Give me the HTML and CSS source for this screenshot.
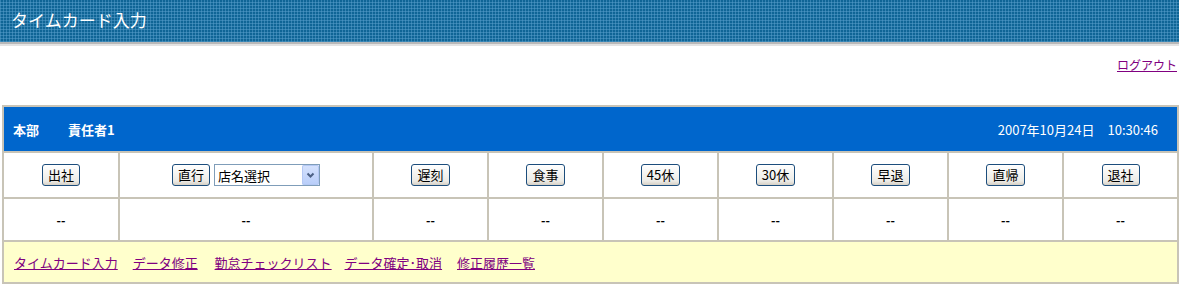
FILE: index.html
```html
<!DOCTYPE html>
<html lang="ja">
<head>
  <meta charset="UTF-8">
  <title>タイムカード入力</title>
  <link rel="stylesheet" href="styles.css">
</head>
<body>
  <div class="banner"><h1>タイムカード入力</h1></div>
  <div class="logout"><a href="#">ログアウト</a></div>
  <table class="timecard">
    <colgroup>
      <col class="w1"><col class="w2">
      <col class="wn"><col class="wn"><col class="wn"><col class="wn"><col class="wn"><col class="wn"><col class="wn">
    </colgroup>
    <tr class="head">
      <td colspan="9">
        <div class="head-row">
          <span class="who">本部<span class="gap"></span>責任者1</span>
          <span class="now">2007年10月24日<span class="gap2"></span>10:30:46</span>
        </div>
      </td>
    </tr>
    <tr class="actions">
      <td><button>出社</button></td>
      <td>
        <button>直行</button>
        <span class="shop">
          <select><option>店名選択</option></select>
          <svg class="drop" width="17" height="20" viewBox="0 0 17 20">
            <path d="M5.5 8.5 L8.5 11.5 L11.5 8.5" fill="none" stroke="#4d6185" stroke-width="2"/>
          </svg>
        </span>
      </td>
      <td><button>遅刻</button></td>
      <td><button>食事</button></td>
      <td><button>45休</button></td>
      <td><button>30休</button></td>
      <td><button>早退</button></td>
      <td><button>直帰</button></td>
      <td><button>退社</button></td>
    </tr>
    <tr class="times">
      <td>--</td><td>--</td><td>--</td><td>--</td><td>--</td><td>--</td><td>--</td><td>--</td><td>--</td>
    </tr>
    <tr class="menu">
      <td colspan="9">
        <a href="#">タイムカード入力</a>
        <a href="#">データ修正</a>
        <a href="#">勤怠チェックリスト</a>
        <a href="#">データ確定･取消</a>
        <a href="#">修正履歴一覧</a>
      </td>
    </tr>
  </table>
</body>
</html>
```

FILE: styles.css
```css
/* Base */
html, body { margin: 0; padding: 0; }

body {
  background: #fff;
  font-family: "Noto Sans CJK JP", "Liberation Sans", sans-serif;
  font-size: 13px;
  color: #000;
  width: 1179px;
}

/* Title banner */
.banner {
  height: 42px;
  background-color: #0f6596;
  background-image:
    repeating-linear-gradient(90deg, rgba(90,160,205,.5) 0 1px, transparent 1px 3px),
    repeating-linear-gradient(0deg, rgba(90,160,205,.5) 0 1px, transparent 1px 3px);
  border-bottom: 2px solid #b8b8b8;
  box-shadow: 0 2px 0 #e2e2e2;
}

.banner h1 {
  margin: 0;
  padding: 7px 0 0 11px;
  font-size: 17px;
  font-weight: normal;
  color: #fff;
  line-height: 26px;
}

.logout {
  text-align: right;
  padding: 12px 2px 0 0;
  height: 61px;
  box-sizing: border-box;
  font-size: 12px;
  line-height: 18px;
}

a { color: #800080; }

/* Table */
.timecard {
  margin: 0 2px;
  width: 1175px;
  border-collapse: collapse;
  border: 2px solid #c3bfb2;
  table-layout: fixed;
}

.w1 { width: 116px; }
.w2 { width: 254px; }
.wn { width: 115px; }

.timecard td {
  border: 2px solid #c8c4b7;
  text-align: center;
  padding: 0;
  white-space: nowrap;
}

.head td {
  background: #0066cc;
  color: #fff;
  height: 44px;
}

.head-row {
  display: flex;
  justify-content: space-between;
  align-items: center;
  padding: 0 19px 0 9px;
  font-size: 13px;
}

.who { font-weight: bold; }
.gap { display: inline-block; width: 29px; }
.gap2 { display: inline-block; width: 13px; }

.actions td { height: 44px; }

button {
  font-family: inherit;
  font-size: 13px;
  line-height: 16px;
  height: 22px;
  padding: 0 5px;
  border: 1px solid #1c4d7c;
  border-radius: 3px;
  background: linear-gradient(#ffffff, #ecebe6 80%, #d6d0c5);
  color: #000;
  vertical-align: middle;
}

/* Shop select with XP style drop button */
.shop {
  position: relative;
  display: inline-block;
  vertical-align: middle;
  margin-left: 1px;
}

.shop select {
  appearance: none;
  -webkit-appearance: none;
  font-family: inherit;
  font-size: 13px;
  width: 106px;
  height: 22px;
  padding: 0 0 0 3px;
  border: 1px solid #7f9db9;
  border-radius: 0;
  background: #fff;
  color: #000;
  display: block;
}

.drop {
  position: absolute;
  right: 1px;
  top: 1px;
  border-radius: 2px;
  background: linear-gradient(#d6e2fd, #b8cdf9);
  box-shadow: inset 0 0 0 1px #b4c8f4;
  pointer-events: none;
}

.times td { height: 41px; font-size: 12px; font-weight: bold; }

.menu td {
  background: #ffffcc;
  height: 40px;
  text-align: left;
  padding-left: 10px;
  font-size: 13px;
}

.menu a { margin-right: 12px; }
.menu a:nth-child(2) { margin-right: 14px; }
.menu a:nth-child(3) { margin-right: 10px; }
```
